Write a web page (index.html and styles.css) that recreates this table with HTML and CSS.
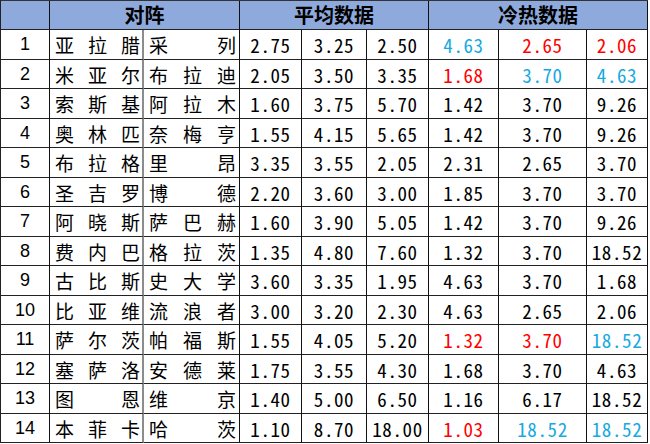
FILE: index.html
```html
<!DOCTYPE html>
<html lang="zh">
<head>
<meta charset="utf-8">
<title>对阵数据</title>
<link rel="stylesheet" href="styles.css">
</head>
<body>
<div class="sheet">
  <div class="hd"></div>
  <div class="hd span2">对阵</div>
  <div class="hd span3">平均数据</div>
  <div class="hd span3 last">冷热数据</div>

  <div class="idx">1</div><div class="team home"><span>亚</span><span>拉</span><span>腊</span></div><div class="team"><span>采</span><span>列</span></div>
  <div class="num">2.75</div><div class="num">3.25</div><div class="num">2.50</div>
  <div class="hot blue">4.63</div><div class="hot red">2.65</div><div class="hot red last">2.06</div>

  <div class="idx">2</div><div class="team home"><span>米</span><span>亚</span><span>尔</span></div><div class="team"><span>布</span><span>拉</span><span>迪</span></div>
  <div class="num">2.05</div><div class="num">3.50</div><div class="num">3.35</div>
  <div class="hot red">1.68</div><div class="hot blue">3.70</div><div class="hot blue last">4.63</div>

  <div class="idx">3</div><div class="team home"><span>索</span><span>斯</span><span>基</span></div><div class="team"><span>阿</span><span>拉</span><span>木</span></div>
  <div class="num">1.60</div><div class="num">3.75</div><div class="num">5.70</div>
  <div class="hot">1.42</div><div class="hot">3.70</div><div class="hot last">9.26</div>

  <div class="idx">4</div><div class="team home"><span>奥</span><span>林</span><span>匹</span></div><div class="team"><span>奈</span><span>梅</span><span>亨</span></div>
  <div class="num">1.55</div><div class="num">4.15</div><div class="num">5.65</div>
  <div class="hot">1.42</div><div class="hot">3.70</div><div class="hot last">9.26</div>

  <div class="idx">5</div><div class="team home"><span>布</span><span>拉</span><span>格</span></div><div class="team"><span>里</span><span>昂</span></div>
  <div class="num">3.35</div><div class="num">3.55</div><div class="num">2.05</div>
  <div class="hot">2.31</div><div class="hot">2.65</div><div class="hot last">3.70</div>

  <div class="idx">6</div><div class="team home"><span>圣</span><span>吉</span><span>罗</span></div><div class="team"><span>博</span><span>德</span></div>
  <div class="num">2.20</div><div class="num">3.60</div><div class="num">3.00</div>
  <div class="hot">1.85</div><div class="hot">3.70</div><div class="hot last">3.70</div>

  <div class="idx">7</div><div class="team home"><span>阿</span><span>晓</span><span>斯</span></div><div class="team"><span>萨</span><span>巴</span><span>赫</span></div>
  <div class="num">1.60</div><div class="num">3.90</div><div class="num">5.05</div>
  <div class="hot">1.42</div><div class="hot">3.70</div><div class="hot last">9.26</div>

  <div class="idx">8</div><div class="team home"><span>费</span><span>内</span><span>巴</span></div><div class="team"><span>格</span><span>拉</span><span>茨</span></div>
  <div class="num">1.35</div><div class="num">4.80</div><div class="num">7.60</div>
  <div class="hot">1.32</div><div class="hot">3.70</div><div class="hot last">18.52</div>

  <div class="idx">9</div><div class="team home"><span>古</span><span>比</span><span>斯</span></div><div class="team"><span>史</span><span>大</span><span>学</span></div>
  <div class="num">3.60</div><div class="num">3.35</div><div class="num">1.95</div>
  <div class="hot">4.63</div><div class="hot">3.70</div><div class="hot last">1.68</div>

  <div class="idx">10</div><div class="team home"><span>比</span><span>亚</span><span>维</span></div><div class="team"><span>流</span><span>浪</span><span>者</span></div>
  <div class="num">3.00</div><div class="num">3.20</div><div class="num">2.30</div>
  <div class="hot">4.63</div><div class="hot">2.65</div><div class="hot last">2.06</div>

  <div class="idx">11</div><div class="team home"><span>萨</span><span>尔</span><span>茨</span></div><div class="team"><span>帕</span><span>福</span><span>斯</span></div>
  <div class="num">1.55</div><div class="num">4.05</div><div class="num">5.20</div>
  <div class="hot red">1.32</div><div class="hot red">3.70</div><div class="hot blue last">18.52</div>

  <div class="idx">12</div><div class="team home"><span>塞</span><span>萨</span><span>洛</span></div><div class="team"><span>安</span><span>德</span><span>莱</span></div>
  <div class="num">1.75</div><div class="num">3.55</div><div class="num">4.30</div>
  <div class="hot">1.68</div><div class="hot">3.70</div><div class="hot last">4.63</div>

  <div class="idx">13</div><div class="team home"><span>图</span><span>恩</span></div><div class="team"><span>维</span><span>京</span></div>
  <div class="num">1.40</div><div class="num">5.00</div><div class="num">6.50</div>
  <div class="hot">1.16</div><div class="hot">6.17</div><div class="hot last">18.52</div>

  <div class="idx">14</div><div class="team home"><span>本</span><span>菲</span><span>卡</span></div><div class="team"><span>哈</span><span>茨</span></div>
  <div class="num">1.10</div><div class="num">8.70</div><div class="num">18.00</div>
  <div class="hot red">1.03</div><div class="hot blue">18.52</div><div class="hot blue last">18.52</div>
</div>
</body>
</html>
```

FILE: styles.css
```css
html, body {
  margin: 0;
  padding: 0;
  background: #ffffff;
}

.sheet {
  display: grid;
  grid-template-columns: 49px 94px 96px 62px 65px 62px 70px 88px 61px;
  grid-template-rows: 29px repeat(7, 30px 29px);
  width: max-content;
  border-top: 1px solid #333;
  border-left: 1px solid #222;
  font-family: "Noto Sans CJK SC", "Liberation Sans", sans-serif;
  color: #000;
}

.sheet > div {
  box-sizing: border-box;
  border-right: 1px solid #111;
  border-bottom: 1px solid #222;
  display: flex;
  align-items: center;
  overflow: hidden;
}

.hd {
  background: #8ea9db;
  justify-content: center;
  font-size: 20px;
  font-weight: 700;
  line-height: 1;
}

.span2 { grid-column: span 2; }
.span3 { grid-column: span 3; }

.idx {
  justify-content: center;
  font-family: "Liberation Sans", sans-serif;
  font-size: 18px;
}

.team {
  justify-content: space-between;
  padding: 0 3px 0 5px;
  font-size: 19px;
  line-height: 1;
}

.sheet > .home {
  border-right: 2px solid #8c8c8c;
  padding-right: 2px;
}

.num, .hot {
  justify-content: center;
  font-size: 19px;
  font-feature-settings: "hwid" 1;
  letter-spacing: 0.6px;
  line-height: 1;
}

.red { color: #ff0000; }
.blue { color: #17a9e1; }
```
